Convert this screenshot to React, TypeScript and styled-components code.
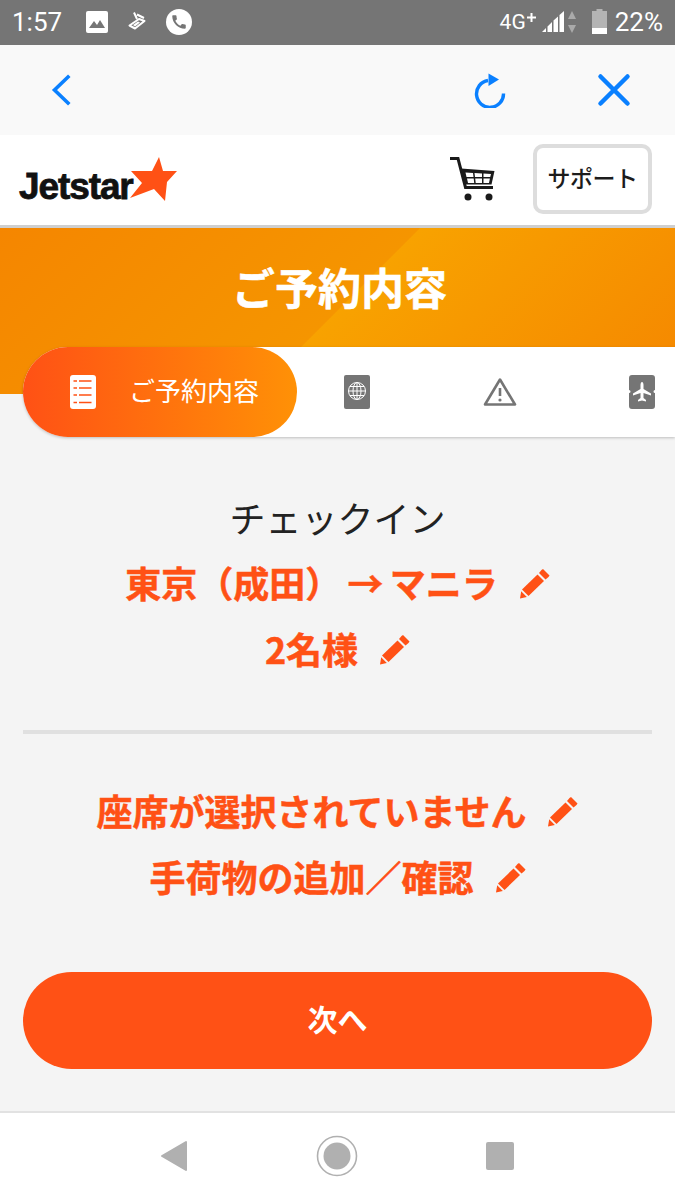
import React from "react";
import styled, { createGlobalStyle } from "styled-components";
import { MdCall } from "react-icons/md";

const JP = `"Noto Sans CJK JP", "Noto Sans", sans-serif`;
const ORANGE = "#ff5115";
const BLUE = "#0a80ff";

const GlobalStyle = createGlobalStyle`
  html, body { margin: 0; padding: 0; background: #f4f4f4; }
  body { font-family: ${JP}; }
  * { box-sizing: border-box; }
`;

const Page = styled.div`
  width: 675px;
  height: 1200px;
  overflow: hidden;
  display: flex;
  flex-direction: column;
  background: #f4f4f4;
`;

const StatusBar = styled.div`
  height: 45px;
  background: #757575;
  color: #fff;
  font-family: Roboto, sans-serif;
  display: flex;
  align-items: center;
  justify-content: space-between;
  padding: 0 12px 0 12px;
`;

const StatusGroup = styled.div`
  display: flex;
  align-items: center;
`;

const StatusText = styled.span<{ $size?: number; $left?: number }>`
  font-size: ${(p) => p.$size ?? 26}px;
  margin-left: ${(p) => p.$left ?? 0}px;
  line-height: 45px;
`;

const StatusIcon = styled.svg<{ $left?: number; $lift?: number }>`
  margin-left: ${(p) => p.$left ?? 0}px;
  margin-bottom: ${(p) => p.$lift ?? 2}px;
`;

const PhoneDot = styled.div`
  width: 26px;
  height: 26px;
  border-radius: 50%;
  background: #fff;
  color: #757575;
  font-size: 18px;
  display: flex;
  align-items: center;
  justify-content: center;
  margin-left: 19px;
  margin-bottom: 2px;
`;

const Toolbar = styled.div`
  height: 90px;
  background: #f9f9f9;
  display: flex;
  align-items: center;
  justify-content: space-between;
  padding: 0 31px;
`;

const ToolGroup = styled.div`
  display: flex;
  gap: 64px;
`;

const ToolButton = styled.div`
  width: 60px;
  height: 60px;
  display: flex;
  align-items: center;
  justify-content: center;
`;

const Header = styled.div`
  height: 93px;
  background: #fff;
  border-bottom: 3px solid #cfcfcf;
  display: flex;
  align-items: center;
  padding: 0 23px 3px 19px;
`;

const Logo = styled.div`
  display: flex;
  align-items: flex-start;
  flex: 1;
`;

const LogoWord = styled.span`
  font-family: "Liberation Sans", sans-serif;
  font-weight: 700;
  font-size: 37px;
  line-height: 40px;
  letter-spacing: -1.1px;
  color: #111;
  margin-top: 16px;
  -webkit-text-stroke: 0.8px #111;
`;

const LogoStar = styled.svg`
  margin-left: -3px;
  margin-top: 6px;
`;

const SupportButton = styled.div`
  width: 119px;
  height: 70px;
  border: 4px solid #ddd;
  border-radius: 10px;
  margin-left: 37px;
  padding-bottom: 3px;
  font-size: 23px;
  font-weight: 500;
  color: #1c1c1c;
  display: flex;
  align-items: center;
  justify-content: center;
  letter-spacing: -0.5px;
`;

const Hero = styled.div`
  height: 166px;
  background: linear-gradient(135deg, #f58600 0%, #f59500 49.9%, #f8a200 50%, #f58700 100%);
  color: #fff;
  font-size: 43px;
  font-weight: 700;
  -webkit-text-stroke: 0.5px #fff;
  text-align: center;
  line-height: 116px;
  padding-left: 4px;
`;

const TabStrip = styled.div`
  height: 90px;
  margin: -47px 0 0 23px;
  background: #fff;
  border-radius: 45px 0 0 45px;
  box-shadow: 0 1px 3px rgba(0, 0, 0, 0.22);
  display: flex;
  align-items: center;
`;

const ActiveTab = styled.div`
  width: 274px;
  height: 90px;
  border-radius: 45px;
  background: linear-gradient(90deg, #ff5115 0%, #ff9106 100%);
  display: flex;
  align-items: center;
  padding-left: 47px;
  gap: 33px;
  color: #fff;
  font-size: 26px;
  font-weight: 400;
  span {
    padding-bottom: 5px;
  }
`;

const TabIcons = styled.div`
  display: flex;
  gap: 82.5px;
  margin-left: 30px;
`;

const TabIcon = styled.div`
  width: 60px;
  height: 60px;
  display: flex;
  align-items: center;
  justify-content: center;
`;

const Summary = styled.div<{ $top: number }>`
  display: flex;
  flex-direction: column;
  align-items: center;
  padding-top: ${(p) => p.$top}px;
`;

const Title = styled.div`
  font-size: 36px;
  line-height: 44px;
  color: #222;
`;

const LinkRow = styled.div<{ $top?: number }>`
  display: flex;
  align-items: center;
  gap: 22px;
  margin-top: ${(p) => p.$top ?? 0}px;
  height: 66px;
  color: ${ORANGE};
  font-size: 36px;
  font-weight: 700;
  word-spacing: -2px;
  -webkit-text-stroke: 0.5px ${ORANGE};
  span {
    padding-bottom: 4px;
  }
`;

const Divider = styled.div`
  height: 4px;
  margin: 47px 23px 0;
  background: #e0e0e0;
`;

const NextButton = styled.div`
  height: 97px;
  margin: 61px 23px 0;
  border-radius: 49px;
  background: ${ORANGE};
  color: #fff;
  font-size: 30px;
  font-weight: 700;
  padding-bottom: 5px;
  display: flex;
  align-items: center;
  justify-content: center;
`;

const NavBar = styled.div`
  margin-top: auto;
  height: 89px;
  background: #fff;
  border-top: 2px solid #e2e2e2;
  display: flex;
  align-items: center;
  justify-content: center;
  gap: 128px;
  padding: 0 2px 1px 0;
`;

const Arrow = () => (
  <svg width="24" height="34" viewBox="0 0 24 34">
    <path d="M19 4 L5.5 17 L19 30" fill="none" stroke={BLUE} strokeWidth="3.6" strokeLinecap="square" />
  </svg>
);

const Reload = () => (
  <svg width="34" height="36" viewBox="0 0 34 36">
    <path d="M15 8.5 A13.5 13.5 0 1 0 30.5 21.5" fill="none" stroke={BLUE} strokeWidth="3.4" />
    <path d="M15.5 1.5 L26 7.5 L15.5 14 Z" fill={BLUE} />
  </svg>
);

const Close = () => (
  <svg width="34" height="34" viewBox="0 0 34 34">
    <path d="M3.5 3.5 L30.5 30.5 M30.5 3.5 L3.5 30.5" stroke={BLUE} strokeWidth="4.5" strokeLinecap="round" />
  </svg>
);

const Cart = () => (
  <svg width="46" height="44" viewBox="0 0 46 44">
    <path d="M0 1.5 H8 L15.5 30.5 H43" fill="none" stroke="#1a1a1a" strokeWidth="3" />
    <path d="M11 11.5 L44.5 14 L41.5 27.5 H14 Z" fill="#1a1a1a" />
    <path
      d="M15.5 15.5 L23 16 L23.5 20 H16.5 Z M24.5 16 L32 16.5 V20 H25 Z M33.5 16.6 L41 17 L40.2 20 H33.5 Z M17 21.5 H23.7 L24.2 26 H18 Z M25.2 21.5 H32 V26 H25.7 Z M33.5 21.5 H39.9 L39 26 H33.5 Z"
      fill="#fff"
    />
    <circle cx="18" cy="40" r="3.5" fill="#1a1a1a" />
    <circle cx="39" cy="40" r="3.5" fill="#1a1a1a" />
  </svg>
);

const Ticket = () => (
  <StatusIcon $left={20} width="19" height="19" viewBox="0 0 19 19">
    <path d="M1.5 13.5 L11 7 L16.5 9 L7 16.5 Z" fill="none" stroke="#fff" strokeWidth="2" strokeLinejoin="round" />
    <path d="M5 13 L10 9.5 L12 10.5 L7 14.5 Z" fill="#fff" />
    <path d="M6 0.5 L9 7 M9 2.5 L16 6" fill="none" stroke="#fff" strokeWidth="2" />
  </StatusIcon>
);

const Pencil = () => (
  <svg width="30" height="30" viewBox="0 0 30 30">
    <path d="M21.5 1 L23 0 L29.5 6.5 L28.5 8 L25.5 10.5 L19 4 Z" fill={ORANGE} />
    <path d="M17.5 5.5 L24 12 L8.5 27 L2 20.5 Z" fill={ORANGE} />
    <path d="M1.2 22.3 L6.8 28 L0 29.5 Z" fill={ORANGE} />
  </svg>
);

const DocIcon = () => (
  <svg width="26" height="34" viewBox="0 0 26 34">
    <rect width="26" height="34" rx="3" fill="#fff" />
    <path
      d="M3.5 6 H7 M9 6 H21.5 M3.5 13 H7 M9 13 H21.5 M3.5 20 H7 M9 20 H21.5 M3.5 27.5 H7 M9 27.5 H21.5"
      stroke={ORANGE}
      strokeWidth="1.5"
    />
  </svg>
);

const PassportIcon = () => (
  <svg width="26" height="34" viewBox="0 0 26 34">
    <rect width="26" height="34" rx="2" fill="#757575" />
    <g fill="none" stroke="#fff" strokeWidth="1">
      <circle cx="13" cy="16" r="8.5" />
      <ellipse cx="13" cy="16" rx="4" ry="8.5" />
      <path d="M13 7.5 V24.5 M4.5 16 H21.5 M5.8 11.5 H20.2 M5.8 20.5 H20.2" />
    </g>
  </svg>
);

const WarningIcon = () => (
  <svg width="34" height="30" viewBox="0 0 34 30">
    <path d="M17 2.5 L32 27.5 H2 Z" fill="none" stroke="#757575" strokeWidth="2.6" strokeLinejoin="round" />
    <path d="M17 11 V19" stroke="#757575" strokeWidth="2.6" />
    <circle cx="17" cy="23" r="1.6" fill="#757575" />
  </svg>
);

const BoardingIcon = () => (
  <svg width="26" height="34" viewBox="0 0 26 34">
    <path
      d="M3 0 H23 A3 3 0 0 1 26 3 V15 A1.5 1.5 0 0 0 26 18 V31 A3 3 0 0 1 23 34 H3 A3 3 0 0 1 0 31 V18 A1.5 1.5 0 0 0 0 15 V3 A3 3 0 0 1 3 0 Z"
      fill="#757575"
    />
    <path
      d="M13 7 C14 7 14.5 8.5 14.5 10 V14 L22 18.5 V20.5 L14.5 18 V23 L17 25 V26.5 L13 25.5 L9 26.5 V25 L11.5 23 V18 L4 20.5 V18.5 L11.5 14 V10 C11.5 8.5 12 7 13 7 Z"
      fill="#fff"
    />
  </svg>
);

const EditLink = ({ children, top }: { children: React.ReactNode; top?: number }) => (
  <LinkRow $top={top}>
    <span>{children}</span>
    <Pencil />
  </LinkRow>
);

export default function App() {
  return (
    <Page>
      <GlobalStyle />
      <StatusBar>
        <StatusGroup>
          <StatusText>1:57</StatusText>
          <StatusIcon $left={24} width="22" height="22" viewBox="0 0 22 22">
            <rect width="22" height="22" rx="2" fill="#fff" />
            <path d="M3 17 L8 10 L11 14 L14 9 L19 17 Z" fill="#757575" />
          </StatusIcon>
          <Ticket />
          <PhoneDot>
            <MdCall />
          </PhoneDot>
        </StatusGroup>
        <StatusGroup>
          <StatusText $size={21}>4G</StatusText>
          <StatusIcon $lift={10} width="11" height="11" viewBox="0 0 11 11">
            <path d="M5.5 1 V10 M1 5.5 H10" stroke="#fff" strokeWidth="2" />
          </StatusIcon>
          <StatusIcon $left={5} width="23" height="23" viewBox="0 0 23 23">
            <path d="M0 22 H4 V18 Z M5.5 22 H10 V12 L5.5 16.5 Z M11.5 22 H16 V6.5 L11.5 10.5 Z M17.5 22 H22 V1 L17.5 5 Z" fill="#fff" />
          </StatusIcon>
          <StatusIcon $left={2} width="10" height="24" viewBox="0 0 10 24">
            <path d="M5 1 L9 9 H1 Z M1 15 H9 L5 23 Z" fill="#aaa" />
          </StatusIcon>
          <StatusIcon $left={15} width="15" height="25" viewBox="0 0 15 25">
            <path d="M4.5 0 H10.5 V2 H15 V25 H0 V2 H4.5 Z" fill="#b4b4b4" />
            <path d="M0 19 H15 V25 H0 Z" fill="#fff" />
          </StatusIcon>
          <StatusText $left={8}>22%</StatusText>
        </StatusGroup>
      </StatusBar>

      <Toolbar>
        <ToolButton>
          <Arrow />
        </ToolButton>
        <ToolGroup>
          <ToolButton>
            <Reload />
          </ToolButton>
          <ToolButton>
            <Close />
          </ToolButton>
        </ToolGroup>
      </Toolbar>

      <Header>
        <Logo>
          <LogoWord>Jetstar</LogoWord>
          <LogoStar width="48" height="46" viewBox="0 0 48 46">
            <path d="M29 0 L33 14 L47 14 L37 25 L35 44 L24 32 L0 41 L12 26 L1 14 L22 14 Z" fill={ORANGE} />
          </LogoStar>
        </Logo>
        <Cart />
        <SupportButton>サポート</SupportButton>
      </Header>

      <Hero>ご予約内容</Hero>

      <TabStrip>
        <ActiveTab>
          <DocIcon />
          <span>ご予約内容</span>
        </ActiveTab>
        <TabIcons>
          <TabIcon>
            <PassportIcon />
          </TabIcon>
          <TabIcon>
            <WarningIcon />
          </TabIcon>
          <TabIcon>
            <BoardingIcon />
          </TabIcon>
        </TabIcons>
      </TabStrip>

      <Summary $top={58}>
        <Title>チェックイン</Title>
        <EditLink top={12}>東京（成田） → マニラ</EditLink>
        <EditLink>2名様</EditLink>
      </Summary>

      <Divider />

      <Summary $top={45}>
        <EditLink>座席が選択されていません</EditLink>
        <EditLink>手荷物の追加／確認</EditLink>
      </Summary>

      <NextButton>次へ</NextButton>

      <NavBar>
        <svg width="28" height="32" viewBox="0 0 28 32">
          <path d="M26 2 V30 L2 16 Z" fill="#b0b0b0" stroke="#b0b0b0" strokeWidth="2" strokeLinejoin="round" />
        </svg>
        <svg width="42" height="42" viewBox="0 0 42 42">
          <circle cx="21" cy="21" r="19.5" fill="none" stroke="#b0b0b0" strokeWidth="1.6" />
          <circle cx="21" cy="21" r="13.5" fill="#b0b0b0" />
        </svg>
        <svg width="28" height="28" viewBox="0 0 28 28">
          <rect width="28" height="28" rx="2" fill="#b0b0b0" />
        </svg>
      </NavBar>
    </Page>
  );
}
